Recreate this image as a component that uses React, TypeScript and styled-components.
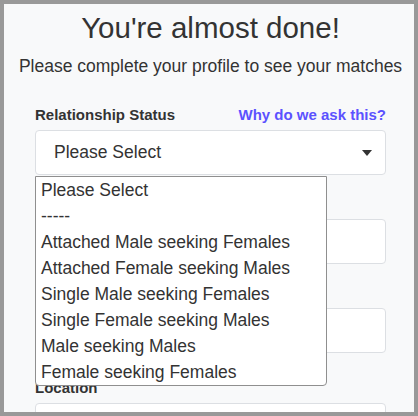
import React from "react";
import styled, { createGlobalStyle } from "styled-components";

const GlobalStyle = createGlobalStyle`
  html, body { margin: 0; padding: 0; }
  body {
    font-family: "Liberation Sans", Arial, sans-serif;
    color: #333;
    background: #999;
  }
  * { box-sizing: border-box; }
`;

const Frame = styled.div`
  width: 418px;
  height: 416px;
  border: 4px solid #999;
  background: #f8f9fa;
  overflow: hidden;
`;

const Header = styled.header`
  padding: 6px 0 0 3px;
  text-align: center;
  white-space: nowrap;
`;

const Title = styled.h1`
  margin: 0;
  font-size: 29.5px;
  line-height: 1.2;
  font-weight: 400;
  color: #333;
`;

const Subtitle = styled.p`
  margin: 7.4px 0 0;
  font-size: 17.5px;
  line-height: 1.5;
  color: #333;
`;

const Form = styled.form`
  padding: 0 28px 0 31px;
  margin-top: 24.7px;
`;

const Group = styled.div<{ $extra?: number }>`
  display: flex;
  flex-direction: column;
  gap: 4px;
  margin-bottom: ${(p) => 17.5 + (p.$extra ?? 0)}px;
`;

const LabelRow = styled.div`
  display: flex;
  justify-content: space-between;
  align-items: baseline;
`;

const Label = styled.label`
  font-size: 15px;
  line-height: 1.5;
  font-weight: 700;
  color: #333;
`;

const HelpLink = styled.a`
  font-size: 15px;
  line-height: 1.5;
  font-weight: 700;
  color: #5b52ff;
  text-decoration: none;
`;

const SelectWrap = styled.div`
  position: relative;
`;

const SelectBox = styled.div`
  height: 45px;
  display: flex;
  align-items: center;
  justify-content: space-between;
  padding: 0 13px 0 18px;
  background: #fff;
  border: 1px solid #dcdfe3;
  border-radius: 4px;
  font-size: 17.5px;
  color: #333;
`;

const Caret = styled.span`
  width: 0;
  height: 0;
  border-left: 5px solid transparent;
  border-right: 5px solid transparent;
  border-top: 6px solid #333;
`;

const Input = styled.div`
  height: 45px;
  background: #fff;
  border: 1px solid #dcdfe3;
  border-radius: 4px;
`;

const OptionList = styled.ul`
  position: absolute;
  top: calc(100% + 1px);
  left: 0;
  width: 292px;
  margin: 0;
  padding: 0;
  list-style: none;
  background: #fff;
  border: 1px solid #8f8f8f;
  border-radius: 0 0 4px 4px;
  z-index: 10;
`;

const Option = styled.li`
  height: 26px;
  line-height: 26px;
  padding: 0 5px;
  font-size: 17.5px;
  color: #333;
  white-space: nowrap;
`;

const options = [
  "Please Select",
  "-----",
  "Attached Male seeking Females",
  "Attached Female seeking Males",
  "Single Male seeking Females",
  "Single Female seeking Males",
  "Male seeking Males",
  "Female seeking Females",
];

export default function App() {
  return (
    <>
      <GlobalStyle />
      <Frame>
        <Header>
          <Title>You're almost done!</Title>
          <Subtitle>Please complete your profile to see your matches</Subtitle>
        </Header>
        <Form>
          <Group>
            <LabelRow>
              <Label>Relationship Status</Label>
              <HelpLink href="#">Why do we ask this?</HelpLink>
            </LabelRow>
            <SelectWrap>
              <SelectBox>
                <span>Please Select</span>
                <Caret />
              </SelectBox>
              <OptionList>
                {options.map((o) => (
                  <Option key={o}>{o}</Option>
                ))}
              </OptionList>
            </SelectWrap>
          </Group>
          <Group>
            <Label>Birthday</Label>
            <Input />
          </Group>
          <Group $extra={6}>
            <Label>Email</Label>
            <Input />
          </Group>
          <Group>
            <Label>Location</Label>
            <Input />
          </Group>
        </Form>
      </Frame>
    </>
  );
}
